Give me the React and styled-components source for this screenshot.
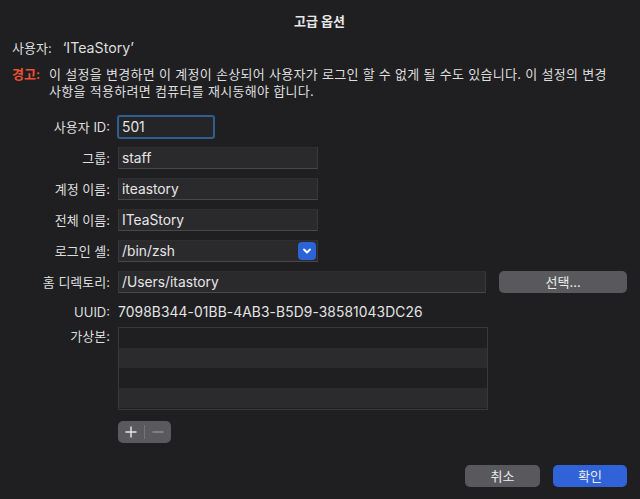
import React from 'react';
import styled, {createGlobalStyle} from 'styled-components';

const Global = createGlobalStyle`
  html, body {
    margin: 0;
    padding: 0;
    background: #1f1f21;
  }
  body {
    font-family: Inter, "Noto Sans CJK KR", sans-serif;
    color: #dedede;
    font-size: 13px;
  }
`;

const Window = styled.div`
  width: 640px;
  height: 499px;
  box-sizing: border-box;
  padding: 12px 13px 0 12px;
  background: #1f1f21;
  display: flex;
  flex-direction: column;
`;

const Title = styled.div`
  text-align: center;
  font-weight: 700;
  font-size: 13px;
  line-height: 18px;
  color: #e8e8e8;
`;

const UserLine = styled.div`
  margin-top: 9px;
  line-height: 18px;
`;

const UserName = styled.span`
  margin-left: 11px;
  font-size: 14.2px;
`;

const Warning = styled.div`
  display: flex;
  margin-top: 9px;
  line-height: 17px;
`;

const WarnLabel = styled.span`
  color: #ef5034;
  font-weight: 600;
  width: 37px;
  flex: none;
`;

const WarnText = styled.span`
  flex: 1;
  word-break: keep-all;
  letter-spacing: 0.3px;
  padding-right: 10px;
`;

const Form = styled.div`
  margin-top: 16px;
  display: flex;
  flex-direction: column;
`;

const Row = styled.div`
  display: flex;
  align-items: ${p => (p.$top ? 'flex-start' : 'center')};
  gap: 8px;
  height: ${p => p.$h || 22}px;
  margin-bottom: ${p => (p.$mb ?? 9)}px;
`;

const Label = styled.div`
  width: 98px;
  flex: none;
  text-align: right;
  line-height: 18px;
  white-space: nowrap;
`;

const Field = styled.div`
  box-sizing: border-box;
  width: ${p => p.$w}px;
  height: 22px;
  padding: 0 3px;
  display: flex;
  align-items: center;
  background: #2a2a2d;
  border: 1px solid #38383b;
  border-top-color: #2f2f31;
  border-bottom-color: #48484b;
  color: #e6e6e6;
  font-size: 13.8px;
  position: relative;
`;

const FocusField = styled(Field)`
  margin-left: -1px;
  height: 24px;
  border: 2px solid #2f5f8e;
  border-radius: 3px;
  padding-left: 3px;
  background: #252527;
`;

const PopupArrow = styled.div`
  position: absolute;
  right: 1px;
  top: 1px;
  width: 18px;
  height: 18px;
  border-radius: 4px;
  background: #2c63d6;
  display: flex;
  align-items: center;
  justify-content: center;
`;

const Button = styled.button`
  box-sizing: border-box;
  height: 22px;
  width: ${p => p.$w}px;
  border: none;
  border-radius: 5px;
  background: ${p => (p.$primary ? '#2f63d7' : '#59595d')};
  color: #ececec;
  font-family: Inter, "Noto Sans CJK KR", sans-serif;
  font-size: 13px;
  padding: 0;
  line-height: 20px;
`;

const SideButton = styled(Button)`
  margin-left: 5px;
`;

const Mono = styled.div`
  font-size: 13.8px;
  color: #e4e4e4;
  letter-spacing: 0.1px;
`;

const List = styled.div`
  box-sizing: border-box;
  width: 370px;
  height: 83px;
  border: 1px solid #38383a;
  display: flex;
  flex-direction: column;
`;

const ListRow = styled.div`
  height: 20px;
  background: ${p => (p.$alt ? '#2b2b2e' : '#1f1f21')};
`;

const Segmented = styled.div`
  margin-top: 11px;
  margin-left: 106px;
  width: 53px;
  height: 22px;
  border-radius: 5px;
  background: #5a5a5e;
  display: flex;
  align-items: center;
`;

const Seg = styled.div`
  flex: 1;
  height: 100%;
  display: flex;
  align-items: center;
  justify-content: center;
`;

const SegDivider = styled.div`
  width: 1px;
  height: 14px;
  background: #75757a;
`;

const Footer = styled.div`
  margin-top: 22px;
  display: flex;
  justify-content: flex-end;
  gap: 13px;
`;

const Chevron = () => (
  <svg width="10" height="8" viewBox="0 0 10 8">
    <path d="M2 2.5 L5 5.5 L8 2.5" stroke="#fff" strokeWidth="1.8" fill="none" strokeLinecap="round" strokeLinejoin="round" />
  </svg>
);

const Plus = () => (
  <svg width="12" height="12" viewBox="0 0 12 12">
    <path d="M6 0.5 V11.5 M0.5 6 H11.5" stroke="#e8e8e8" strokeWidth="1.4" />
  </svg>
);

const Minus = () => (
  <svg width="12" height="12" viewBox="0 0 12 12">
    <path d="M0.5 6 H11.5" stroke="#9a9a9e" strokeWidth="1.2" />
  </svg>
);

export default function App() {
  return (
    <Window>
      <Global />
      <Title>고급 옵션</Title>
      <UserLine>
        사용자:<UserName>‘ITeaStory’</UserName>
      </UserLine>
      <Warning>
        <WarnLabel>경고:</WarnLabel>
        <WarnText>
          이 설정을 변경하면 이 계정이 손상되어 사용자가 로그인 할 수 없게 될 수도 있습니다. 이 설정의 변경 사항을 적용하려면 컴퓨터를 재시동해야 합니다.
        </WarnText>
      </Warning>
      <Form>
        <Row>
          <Label>사용자 ID:</Label>
          <FocusField $w={98}>501</FocusField>
        </Row>
        <Row>
          <Label>그룹:</Label>
          <Field $w={200}>staff</Field>
        </Row>
        <Row>
          <Label>계정 이름:</Label>
          <Field $w={200}>iteastory</Field>
        </Row>
        <Row>
          <Label>전체 이름:</Label>
          <Field $w={200}>ITeaStory</Field>
        </Row>
        <Row>
          <Label>로그인 셸:</Label>
          <Field $w={200}>
            /bin/zsh
            <PopupArrow><Chevron /></PopupArrow>
          </Field>
        </Row>
        <Row>
          <Label>홈 디렉토리:</Label>
          <Field $w={369}>/Users/itastory</Field>
          <SideButton $w={128}>선택...</SideButton>
        </Row>
        <Row $h={20} $mb={5}>
          <Label>UUID:</Label>
          <Mono>7098B344-01BB-4AB3-B5D9-38581043DC26</Mono>
        </Row>
        <Row $top $h={83} $mb={0}>
          <Label>가상본:</Label>
          <List>
            <ListRow />
            <ListRow $alt />
            <ListRow />
            <ListRow $alt />
          </List>
        </Row>
        <Segmented>
          <Seg><Plus /></Seg>
          <SegDivider />
          <Seg><Minus /></Seg>
        </Segmented>
      </Form>
      <Footer>
        <Button $w={75}>취소</Button>
        <Button $w={74} $primary>확인</Button>
      </Footer>
    </Window>
  );
}
